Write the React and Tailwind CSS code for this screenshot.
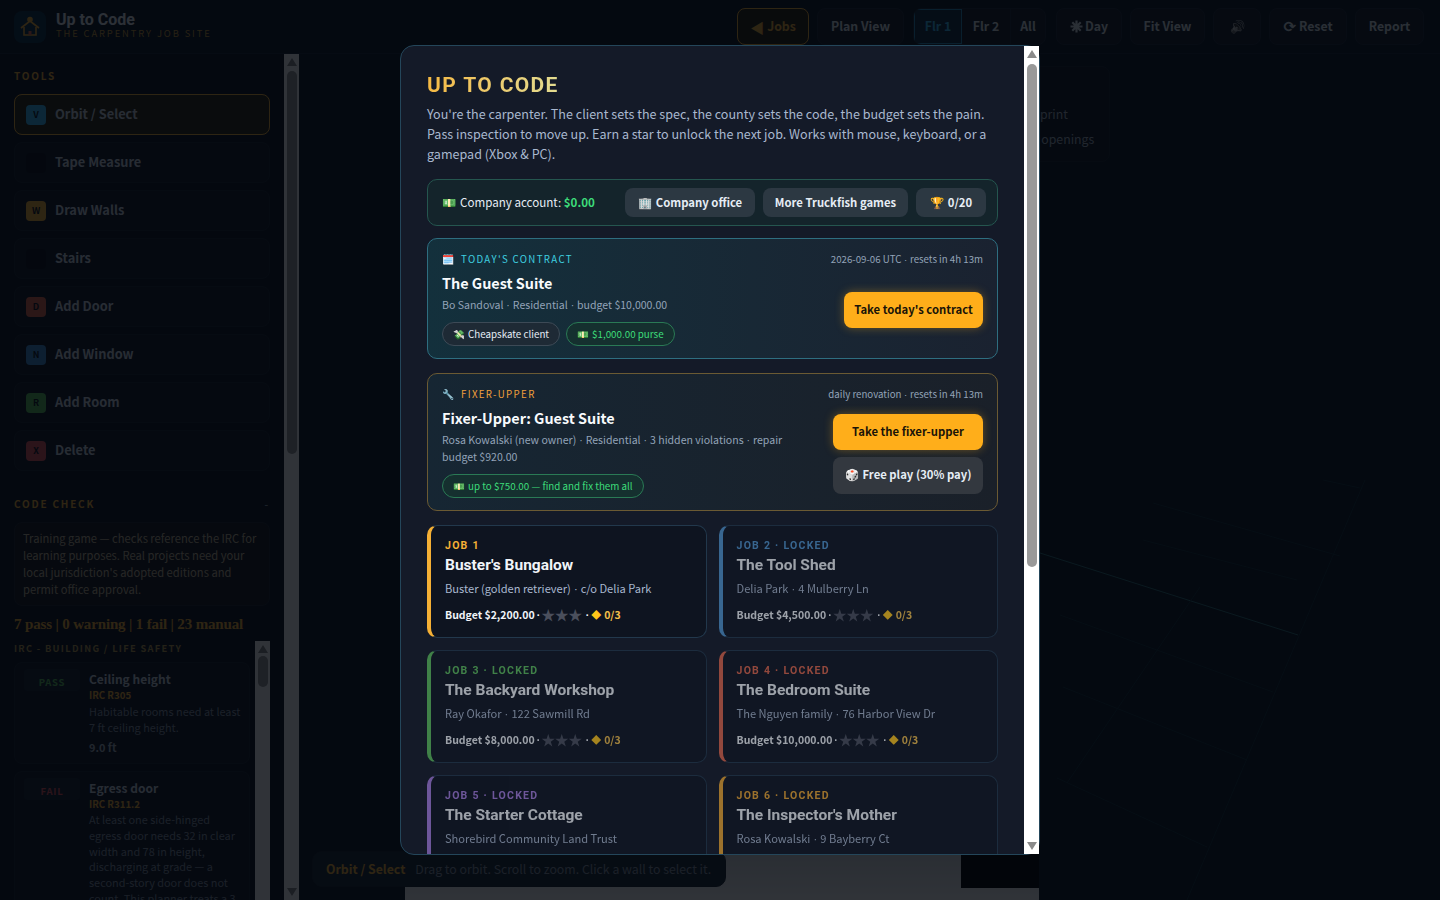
import React from 'react';

const tools = [
  { key: 'V', label: 'Orbit / Select', badge: 'bg-[#38bdf8]', active: true },
  { key: '', label: 'Tape Measure', badge: 'bg-[#0b1018]' },
  { key: 'W', label: 'Draw Walls', badge: 'bg-[#f5b035]' },
  { key: '', label: 'Stairs', badge: 'bg-[#0b1018]' },
  { key: 'D', label: 'Add Door', badge: 'bg-[#e0654a]' },
  { key: 'N', label: 'Add Window', badge: 'bg-[#3f8fd8]' },
  { key: 'R', label: 'Add Room', badge: 'bg-[#5cc05c]' },
  { key: 'X', label: 'Delete', badge: 'bg-[#e0525c]' },
];

const jobs = [
  { tag: 'JOB 1', title: "Buster's Bungalow", who: 'Buster (golden retriever) · c/o Delia Park', budget: '$2,200.00', bar: 'border-l-[#f5b035]', text: 'text-[#f5b035]' },
  { tag: 'JOB 2 · LOCKED', title: 'The Tool Shed', who: 'Delia Park · 4 Mulberry Ln', budget: '$4,500.00', bar: 'border-l-[#4f95d0]', text: 'text-[#4f95d0]', locked: true },
  { tag: 'JOB 3 · LOCKED', title: 'The Backyard Workshop', who: 'Ray Okafor · 122 Sawmill Rd', budget: '$8,000.00', bar: 'border-l-[#5cc05c]', text: 'text-[#5cc05c]', locked: true },
  { tag: 'JOB 4 · LOCKED', title: 'The Bedroom Suite', who: 'The Nguyen family · 76 Harbor View Dr', budget: '$10,000.00', bar: 'border-l-[#e0654a]', text: 'text-[#e0654a]', locked: true },
  { tag: 'JOB 5 · LOCKED', title: 'The Starter Cottage', who: 'Shorebird Community Land Trust', budget: '$14,000.00', bar: 'border-l-[#a57de0]', text: 'text-[#a57de0]', locked: true },
  { tag: 'JOB 6 · LOCKED', title: "The Inspector's Mother", who: 'Rosa Kowalski · 9 Bayberry Ct', budget: '$18,000.00', bar: 'border-l-[#f0a830]', text: 'text-[#f0a830]', locked: true },
];

// the CJK font's middot is very wide, so dots get a latin font
const Dotted = ({ text }) => (
  <>
    {text.split(' · ').map((part, i) => (
      <React.Fragment key={i}>
        {i > 0 && <span className="font-['Liberation_Sans',sans-serif] leading-[0]"> · </span>}
        {part}
      </React.Fragment>
    ))}
  </>
);

const Emoji = ({ children, size = 'text-[11.5px] mr-[4px]' }) => (
  <span className={`leading-[0] tracking-normal ${size}`}>{children}</span>
);

// classic scrollbar, the page shows them with arrows at both ends
const Scrollbar = ({ offset, thumb }) => (
  <div className="flex h-full w-[15px] shrink-0 flex-col items-center bg-white pt-[4px] pb-[4px]">
    <svg width="10" height="8" viewBox="0 0 10 8" className="shrink-0"><path d="M5 0 L10 8 L0 8 Z" fill="#8a8a8a" /></svg>
    <div className="w-[10px] shrink-0 rounded-full bg-[#999]" style={{ marginTop: offset, height: thumb }} />
    <svg width="10" height="8" viewBox="0 0 10 8" className="mt-auto shrink-0"><path d="M0 0 L10 0 L5 8 Z" fill="#8a8a8a" /></svg>
  </div>
);

const JobCard = ({ job }) => (
  <div className={`h-[113px] rounded-[10px] border border-[#22384c] border-l-4 ${job.bar} bg-[#0e1420] pl-[14px] pr-3 pt-[13px] ${job.locked ? 'opacity-[0.62]' : ''}`}>
    <div className={`h-[14px] font-['Roboto',sans-serif] text-[10.5px] leading-[14px] font-bold tracking-[0.12em] ${job.text}`}>{job.tag}</div>
    <div className="mt-[1px] h-[22px] font-['Roboto',sans-serif] text-[15.5px] leading-[22px] font-bold text-[#f1f5f9]">{job.title}</div>
    <div className="mt-[3px] h-[18px] text-[11.1px] leading-[18px] text-[#a9b8cf]"><Dotted text={job.who} /></div>
    <div className="mt-[9px] flex h-[18px] items-center text-[10.5px] leading-[18px] font-bold text-[#f1f5f9]">
      <span>Budget {job.budget}</span>
      <span className="ml-[2px] font-['Liberation_Sans',sans-serif]">·</span>
      <span className="ml-[1px] pb-[2px] text-[14px] leading-none font-normal tracking-[-0.5px] text-[#4a4f5c]">★★★</span>
      <span className="ml-[4px] font-['Liberation_Sans',sans-serif]">·</span>
      <span className="ml-[2px] text-[10px] font-normal text-[#ffc61a]">◆</span>
      <span className="ml-[3px] text-[#f5c04a]">0/3</span>
    </div>
  </div>
);

const Modal = () => (
  <div className="flex h-[810px] w-[640px] rounded-[14px] border border-[#24465a] bg-[#141a28]">
    <div className="w-[623px] shrink-0 overflow-hidden rounded-l-[13px] px-[26px] pt-6">
      <h1 className="inline-block bg-gradient-to-r from-[#f5b942] to-[#e3dc90] bg-clip-text font-['Roboto',sans-serif] text-[21px] leading-[30px] font-bold tracking-[0.065em] text-transparent">UP TO CODE</h1>
      <p className="mt-1 text-[12.55px] leading-5 text-[#a9b8cf]">
        You're the carpenter. The client sets the spec, the county sets the code, the budget sets the pain. Pass inspection to move up. Earn a star to unlock the next job. Works with mouse, keyboard, or a gamepad (Xbox &amp; PC).
      </p>

      <div className="mt-[15px] flex h-[47px] items-center justify-between rounded-[10px] border border-[#25564f] bg-[#14242b] pr-[11px] pl-[14px]">
        <div className="text-[11.6px] whitespace-nowrap text-[#e6edf5]"><Emoji>💵</Emoji>Company account: <b className="font-bold text-[#3ddc7a]">$0.00</b></div>
        <div className="flex items-center gap-2">
          <button className="h-[29px] w-[130px] rounded-lg bg-[#2c3842] text-[11.3px] font-bold whitespace-nowrap text-[#e6edf5]"><Emoji>🏢</Emoji>Company office</button>
          <button className="h-[29px] w-[145px] rounded-lg bg-[#2c3842] text-[11.3px] font-bold whitespace-nowrap text-[#e6edf5]">More Truckfish games</button>
          <button className="h-[29px] w-[70px] rounded-lg bg-[#2c3842] text-[11.3px] font-bold whitespace-nowrap text-[#e6edf5]"><Emoji>🏆</Emoji>0/20</button>
        </div>
      </div>

      <div className="mt-3 h-[121px] rounded-[10px] border border-[#2e6e80] bg-gradient-to-r from-[#13303c] to-[#1a2230] px-[14px] pt-3">
        <div className="flex h-4 items-center justify-between text-[9.7px]">
          <span className="tracking-[0.14em] text-[#3fd0e0]"><Emoji size="text-[10px] mr-[7px]">🗓️</Emoji>TODAY'S CONTRACT</span>
          <span className="pt-[1px] text-[#93a3b8]"><Dotted text="2026-09-06 UTC · resets in 4h 13m" /></span>
        </div>
        <div className="mt-[5px] flex items-center justify-between">
          <div>
            <div className="h-[22px] text-[14.4px] leading-[22px] font-bold text-[#f8fafc]">The Guest Suite</div>
            <div className="mt-[3px] h-4 text-[10.55px] leading-4 text-[#93a3b8]"><Dotted text="Bo Sandoval · Residential · budget $10,000.00" /></div>
            <div className="mt-[9px] flex gap-[6px]">
              <span className="flex h-6 items-center rounded-full border border-[#3d4a56] bg-[#1e2a35] px-[10px] text-[9.8px] whitespace-nowrap text-[#e6edf5]"><Emoji size="text-[9.5px] mr-[3px]">💸</Emoji>Cheapskate client</span>
              <span className="flex h-6 items-center rounded-full border border-[#2a7a55] bg-[#15302f] px-[10px] text-[9.8px] whitespace-nowrap text-[#3ddc7a]"><Emoji size="text-[9.5px] mr-[3px]">💵</Emoji>$1,000.00 purse</span>
            </div>
          </div>
          <button className="mt-[2px] h-9 w-[139px] rounded-lg bg-[#ffae1a] pb-[2px] text-[11.3px] font-bold whitespace-nowrap text-[#1a1408] shadow-[0_0_10px_rgba(255,174,26,0.35)]">Take today's contract</button>
        </div>
      </div>

      <div className="mt-[14px] h-[138px] rounded-[10px] border border-[#6b5a33] bg-gradient-to-r from-[#162633] to-[#1a2029] px-[14px] pt-3">
        <div className="flex h-4 items-center justify-between text-[9.7px]">
          <span className="tracking-[0.14em] text-[#f0a03c]"><Emoji size="text-[10px] mr-[7px]">🔧</Emoji>FIXER-UPPER</span>
          <span className="pt-[1px] text-[#93a3b8]"><Dotted text="daily renovation · resets in 4h 13m" /></span>
        </div>
        <div className="mt-[5px] flex items-center justify-between">
          <div className="w-[350px]">
            <div className="h-[22px] text-[14.4px] leading-[22px] font-bold text-[#f8fafc]">Fixer-Upper: Guest Suite</div>
            <div className="mt-[2px] text-[10.57px] leading-[17px] text-[#93a3b8]"><Dotted text="Rosa Kowalski (new owner) · Residential · 3 hidden violations · repair budget $920.00" /></div>
            <span className="mt-[9px] inline-flex h-6 items-center rounded-full border border-[#2a7a55] bg-[#15302f] px-[10px] text-[9.8px] whitespace-nowrap text-[#3ddc7a]"><Emoji size="text-[9.5px] mr-[3px]">💵</Emoji>up to $750.00 — find and fix them all</span>
          </div>
          <div className="mt-[3px] flex w-[150px] flex-col gap-[7px]">
            <button className="h-9 rounded-lg bg-[#ffae1a] pb-[2px] text-[11.3px] font-bold whitespace-nowrap text-[#1a1408] shadow-[0_0_10px_rgba(255,174,26,0.35)]">Take the fixer-upper</button>
            <button className="h-[37px] rounded-lg bg-[#33383f] pb-[2px] text-[11.3px] font-bold whitespace-nowrap text-[#e6edf5]"><Emoji>🎲</Emoji>Free play (30% pay)</button>
          </div>
        </div>
      </div>

      <div className="mt-[14px] grid grid-cols-2 gap-3">
        {jobs.map((job) => <JobCard key={job.tag} job={job} />)}
      </div>
    </div>
    <Scrollbar offset="6px" thumb="503px" />
  </div>
);

const HeaderBtn = ({ w, gold, children }) => (
  <button className={`flex h-[37px] ${w} items-center justify-center rounded-lg border text-[12.3px] font-bold whitespace-nowrap ${gold ? 'border-[#f5b035] bg-[#2a2210] text-[#f5b035]' : 'border-[#202a38] bg-[#161d29] text-[#dfe6ee]'}`}>{children}</button>
);

const Sidebar = () => (
  <aside className="flex h-full w-[299px] shrink-0 bg-[#0d131d]">
    <div className="w-[284px] shrink-0 overflow-hidden pt-[15px] pl-[14px] pr-[14px]">
      <div className="h-[14px] text-[10px] leading-[14px] font-bold tracking-[0.18em] text-[#f5b035]">TOOLS</div>
      <div className="mt-[11px] flex flex-col gap-[7px]">
        {tools.map((t) => (
          <div key={t.label} className={`flex h-[41px] items-center rounded-lg border px-[11px] ${t.active ? 'border-[#f5b035] bg-[#2e2712]' : 'border-[#1b2430] bg-[#111925]'}`}>
            <span className={`flex h-5 w-5 items-center justify-center rounded text-[9px] font-bold text-[#0d131d] ${t.badge}`}>{t.key}</span>
            <span className="ml-[9px] pb-[2px] text-[12.8px] font-bold text-[#cdd6e2]">{t.label}</span>
          </div>
        ))}
      </div>
      <div className="mt-[25px] flex h-[14px] items-center justify-between text-[10px] font-bold tracking-[0.18em] text-[#f5b035]">
        <span>CODE CHECK</span><span className="text-[#8a95a5]">-</span>
      </div>
      <div className="mt-[12px] h-[84px] rounded-lg border border-[#1e2430] bg-[#1a1a1c] px-2 pt-[7px] text-[11.2px] leading-[17px] text-[#c4b89a]">
        Training game — checks reference the IRC for learning purposes. Real projects need your local jurisdiction's adopted editions and permit office approval.
      </div>
      <div className="mt-2 h-5 font-['Liberation_Serif',serif] text-[15px] leading-5 font-bold tracking-[-0.15px] whitespace-nowrap text-[#f5b035]">7 pass | 0 warning | 1 fail | 23 manual</div>
      <div className="mt-[7px] flex h-[420px]">
        <div className="w-[241px] shrink-0 overflow-hidden pr-[5px]">
          <div className="h-3 text-[9.3px] leading-[14px] font-bold tracking-[0.14em] whitespace-nowrap text-[#b89a50]">IRC - BUILDING / LIFE SAFETY</div>
          <div className="mt-[9px] flex flex-col gap-[7px]">
            <div className="flex h-[102px] shrink-0 rounded-lg border border-[#1b2430] bg-[#111925] pr-[6px] pl-[9px] pt-[6px]">
              <span className="h-[22px] w-[56px] shrink-0 rounded bg-[#182430] text-center text-[9.5px] leading-[26px] font-bold tracking-[0.08em] text-[#5cc05c]">PASS</span>
              <div className="ml-[9px]">
                <div className="text-[12px] leading-[20px] font-bold text-[#cdd6e2]">Ceiling height</div>
                <div className="text-[9.7px] leading-[13px] font-bold text-[#f5b035]">IRC R305</div>
                <div className="mt-[1px] text-[10.9px] leading-4 text-[#8a95a5]">Habitable rooms need at least 7 ft ceiling height.</div>
                <div className="mt-[4px] text-[10.9px] font-bold text-[#a9b4c2]">9.0 ft</div>
              </div>
            </div>
            <div className="flex h-[170px] shrink-0 rounded-lg border border-[#1b2430] bg-[#111925] pr-[6px] pl-[9px] pt-[6px]">
              <span className="h-[22px] w-[56px] shrink-0 rounded bg-[#182430] text-center text-[9.5px] leading-[26px] font-bold tracking-[0.08em] text-[#e0525c]">FAIL</span>
              <div className="ml-[9px]">
                <div className="text-[12px] leading-[20px] font-bold text-[#cdd6e2]">Egress door</div>
                <div className="text-[9.7px] leading-[13px] font-bold text-[#f5b035]">IRC R311.2</div>
                <div className="mt-[1px] text-[10.9px] leading-[15.8px] text-[#8a95a5]">At least one side-hinged egress door needs 32 in clear width and 78 in height, discharging at grade — a second-story door does not count. This planner treats a 3</div>
              </div>
            </div>
          </div>
        </div>
        <Scrollbar offset="3px" thumb="31px" />
      </div>
    </div>
    <Scrollbar offset="5px" thumb="383px" />
  </aside>
);

export default function App() {
  return (
    <div className="relative flex h-screen w-full flex-col overflow-hidden bg-[#0b1622] font-['Noto_Sans_CJK_SC','Noto_Sans',sans-serif]">
      <header className="flex h-[54px] shrink-0 items-center border-b border-[#1a2634] bg-[#0e1622] pr-4 pl-[14px]">
        <div className="flex h-8 w-8 items-center justify-center rounded-lg bg-[#10344a]">
          <svg width="22" height="22" viewBox="0 0 22 22" fill="none" stroke="#f5b035" strokeWidth="1.6">
            <path d="M2 12 L11 5 L20 12" />
            <path d="M5 11 V19 H17 V11" />
            <circle cx="11" cy="3.5" r="2" fill="#f5b035" />
            <rect x="9.5" y="15" width="3" height="4" fill="#e0654a" stroke="none" />
          </svg>
        </div>
        <div className="ml-[10px] -mt-[3px]">
          <div className="font-['Roboto',sans-serif] text-[16px] leading-[17px] font-bold text-[#e6edf5]">Up to Code</div>
          <div className="text-[9.4px] leading-[11px] tracking-[0.2em] text-[#c79a3a]">THE CARPENTRY JOB SITE</div>
        </div>
        <div className="ml-auto flex items-center gap-2">
          <HeaderBtn w="w-[72px]" gold><span className="mr-[3px] text-[14px] leading-[0]">◀</span>Jobs</HeaderBtn>
          <HeaderBtn w="w-[87px]">Plan View</HeaderBtn>
          <div className="ml-px mr-[2px] flex h-[37px] w-[133px] overflow-hidden rounded-lg border border-[#202a38] bg-[#161d29] text-[12.3px] font-bold text-[#dfe6ee]">
            <span className="flex w-[48px] items-center justify-center border border-[#2a8fc0] bg-[#123142] text-[#38bdf8]">Flr 1</span>
            <span className="flex w-[49px] items-center justify-center border-r border-[#202a38]">Flr 2</span>
            <span className="flex flex-1 items-center justify-center">All</span>
          </div>
          <HeaderBtn w="w-[66px]">
            <svg width="13" height="13" viewBox="0 0 13 13" stroke="#dfe6ee" strokeWidth="2.2" className="mr-[2px]">
              <path d="M6.5 0.5 V12.5 M0.5 6.5 H12.5 M2.3 2.3 L10.7 10.7 M10.7 2.3 L2.3 10.7" />
            </svg>
            Day
          </HeaderBtn>
          <HeaderBtn w="w-[75px]">Fit View</HeaderBtn>
          <HeaderBtn w="w-[48px]"><span className="grayscale">🔊</span></HeaderBtn>
          <HeaderBtn w="w-[78px]"><span className="mr-[3px] font-['DejaVu_Sans',sans-serif] text-[15px] leading-[0]">⟳</span>Reset</HeaderBtn>
          <HeaderBtn w="w-[69px]">Report</HeaderBtn>
        </div>
      </header>

      <div className="flex min-h-0 flex-1">
        <Sidebar />
        <main className="relative flex-1 overflow-hidden">
          <svg className="absolute inset-0 h-full w-full" viewBox="299 54 1141 846" fill="none" stroke="#14303a">
            <path d="M1040 553 L1298 635" stroke="#2f7076" />
            <path d="M1365 480 L1187 900" />
            <path d="M1153 503 L1340 556 M1143 540 L1297 580 M1060 615 L1273 692 M1063 687 L1247 760 M1057 778 L1207 847 M1200 587 L1067 783 M1323 480 L1360 488" />
          </svg>
          <div className="absolute top-[12px] left-[697px] h-[96px] w-[114px] rounded-lg border border-[#1b2430] bg-[#111925] pt-[35px] pl-[17px] text-[12.3px] leading-[25px] whitespace-nowrap text-[#a9b4c2]">
            <div>Footprint</div>
            <div>Wall openings</div>
          </div>
          <div className="absolute top-[786px] left-[106px] h-[60px] w-[634px] bg-gradient-to-b from-[#d0d6da] to-white" />
          <div className="absolute top-[800px] left-[662px] h-[34px] w-[78px] bg-black" />
          <div className="absolute top-[797px] left-[13px] flex h-9 w-[414px] items-center rounded-[10px] border border-[#1b2430] bg-[#1a2a36] pl-[13px] text-[12.3px] whitespace-nowrap">
            <b className="font-bold text-[#f5b035]">Orbit / Select</b>
            <span className="ml-[10px] text-[#8a95a5]">Drag to orbit. Scroll to zoom. Click a wall to select it.</span>
          </div>
        </main>
      </div>

      <div className="absolute inset-0 flex items-center justify-center bg-[rgba(2,6,12,0.82)]">
        <Modal />
      </div>
    </div>
  );
}
